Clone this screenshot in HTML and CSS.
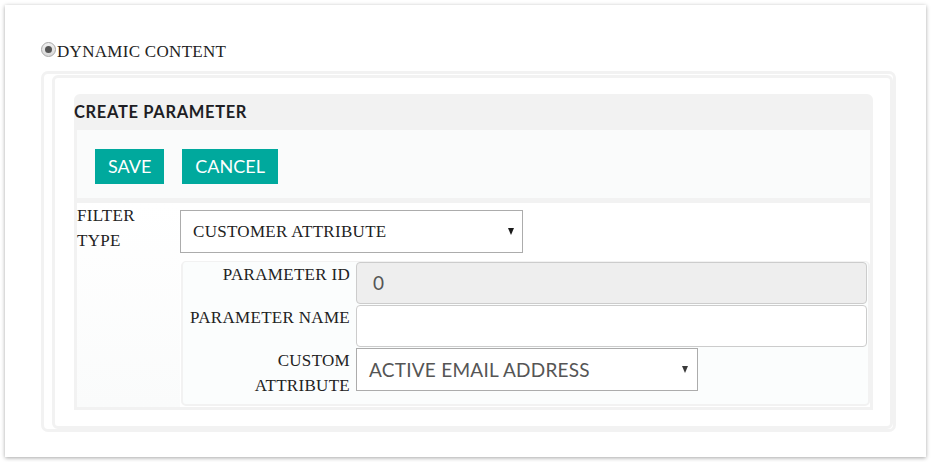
FILE: index.html
```html
<!DOCTYPE html>
<html>
<head>
<meta charset="utf-8">
<link rel="stylesheet" href="styles.css">
</head>
<body>
<div class="card">
  <div class="radio-row">
    <span class="radio"><span class="radio-dot"></span></span>
    <span class="radio-label">DYNAMIC CONTENT</span>
  </div>
  <div class="outer-box">
    <div class="inner-box">
      <div class="panel-head">CREATE PARAMETER</div>
      <div class="panel-body">
        <div class="btn-row">
          <button class="btn">SAVE</button>
          <button class="btn">CANCEL</button>
        </div>
        <div class="filter">
          <div class="filter-label">FILTER<br>TYPE</div>
          <div class="filter-main">
            <div class="select select-filter">
              <span>CUSTOMER ATTRIBUTE</span>
              <span class="arrow"></span>
            </div>
            <div class="sub-panel">
              <div class="sub-label">PARAMETER ID</div>
              <div class="field field-disabled">0</div>
              <div class="sub-label">PARAMETER NAME</div>
              <div class="field"></div>
              <div class="sub-label">CUSTOM<br>ATTRIBUTE</div>
              <div class="select select-attr">
                <span>ACTIVE EMAIL ADDRESS</span>
                <span class="arrow arrow-light"></span>
              </div>
            </div>
          </div>
        </div>
      </div>
    </div>
  </div>
</div>
</body>
</html>
```

FILE: styles.css
```css
* { box-sizing: border-box; }

html, body {
  margin: 0;
  padding: 0;
  background: #ffffff;
}

.card {
  margin: 5px;
  width: 921px;
  height: 452px;
  padding: 35px 0 0 36px;
  background: #ffffff;
  box-shadow: 0 1px 4px rgba(0, 0, 0, 0.35);
  font-family: "Liberation Serif", "Times New Roman", serif;
  color: #222222;
}

.radio-row {
  display: flex;
  align-items: flex-start;
  height: 24px;
  font-size: 17px;
  line-height: 24px;
  letter-spacing: 0.3px;
}

.radio {
  width: 15px;
  height: 15px;
  margin-top: 2px;
  border-radius: 50%;
  border: 1px solid #a8a8a8;
  background: linear-gradient(#f0f0f0, #d8d8d8);
  display: flex;
  align-items: center;
  justify-content: center;
}

.radio-dot {
  width: 7px;
  height: 7px;
  border-radius: 50%;
  background: #555555;
}

.radio-label {
  margin-left: 1px;
}

.outer-box {
  margin-top: 7px;
  width: 855px;
  border: 3px solid #f2f2f2;
  border-radius: 7px;
  padding: 1px 0 0 8px;
}

.inner-box {
  border: 3px solid #f2f2f2;
  border-radius: 6px;
  padding: 16px 17px 16px 19px;
}

.panel-head {
  height: 36px;
  background: #f2f2f2;
  border-radius: 6px 6px 0 0;
  font-family: Lato, "Open Sans", sans-serif;
  font-weight: bold;
  font-size: 16.5px;
  line-height: 36px;
  letter-spacing: 0.65px;
  color: #1e1e24;
}

.panel-body {
  border: 3px solid #f2f2f2;
  border-top: 0;
}

.btn-row {
  display: flex;
  gap: 18px;
  padding: 19px 0 14px 18px;
  background: #fafbfb;
  border-bottom: 5px solid #f2f2f2;
}

.btn {
  height: 35px;
  padding: 0 13px;
  border: 0;
  border-radius: 0;
  background: #00a99d;
  color: #ffffff;
  font-family: Lato, "Open Sans", sans-serif;
  font-size: 18px;
  line-height: 35px;
}

.filter {
  display: flex;
  height: 204px;
  background: linear-gradient(#ffffff, #fafbfb);
}

.filter-label {
  width: 103px;
  font-size: 17px;
  line-height: 25px;
  letter-spacing: 0.3px;
}

.filter-main {
  flex: 1;
  padding-top: 7px;
  background: #ffffff;
}

.select {
  display: flex;
  align-items: center;
  justify-content: space-between;
  height: 43px;
  border: 1px solid #acacac;
  background: #ffffff;
  padding: 0 8px 0 12px;
}

.select-filter {
  width: 343px;
  font-size: 17px;
  letter-spacing: 0.3px;
}

.arrow {
  width: 0;
  height: 0;
  border-left: 3.5px solid transparent;
  border-right: 3.5px solid transparent;
  border-top: 7px solid #1a1a1a;
}

.arrow-light {
  border-top-color: #3a3a3a;
  margin-right: 1px;
}

.sub-panel {
  margin: 8px 0 0 1px;
  width: 689px;
  height: 145px;
  border: 2px solid #f2f2f2;
  border-top-width: 1px;
  border-radius: 5px;
  padding-right: 1px;
  background: #fbfdfd;
  display: grid;
  grid-template-columns: 167px 511px;
  grid-template-rows: 42px 42px 43px;
  column-gap: 6px;
  row-gap: 1px;
  align-content: start;
}

.sub-label {
  text-align: right;
  font-size: 17px;
  line-height: 25px;
  letter-spacing: 0.3px;
}

.field {
  border: 1px solid #cccccc;
  border-radius: 4px;
  background: #ffffff;
  font-family: Lato, "Open Sans", sans-serif;
  font-size: 19px;
  line-height: 40px;
  color: #555555;
  padding-left: 16px;
}

.field-disabled {
  background: #eeeeee;
}

.select-attr {
  width: 342px;
  font-family: Lato, "Open Sans", sans-serif;
  font-size: 19px;
  letter-spacing: 0.25px;
  color: #555555;
  padding-right: 8px;
}
```
